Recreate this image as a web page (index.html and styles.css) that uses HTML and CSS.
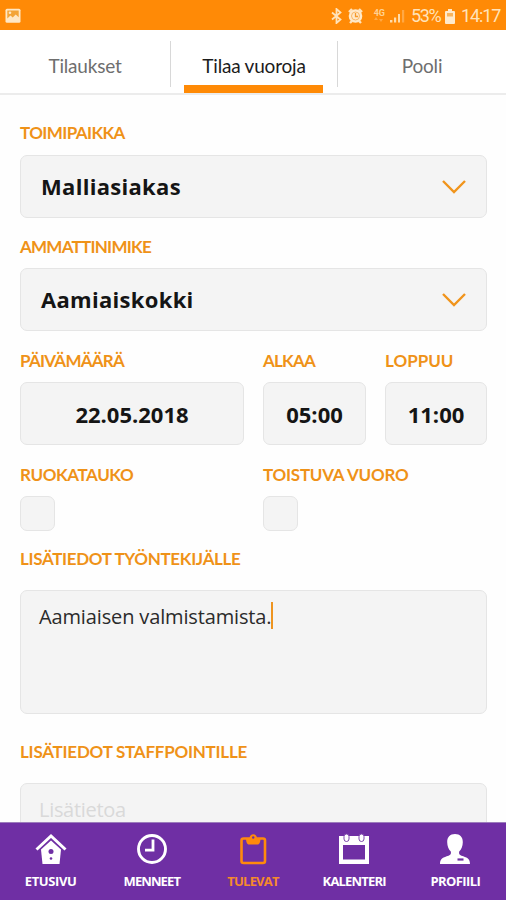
FILE: index.html
```
<!DOCTYPE html>
<html lang="fi">
<head>
    <meta charset="UTF-8">
    <meta name="viewport" content="width=device-width, initial-scale=1.0">
    <title>Tilaa vuoroja</title>
    <link rel="stylesheet" href="styles.css">
</head>
<body>

<div class="status-bar">
    <svg class="status-photo" width="16" height="16" viewBox="0 0 16 16">
        <rect x="0.5" y="0.8" width="15" height="14" rx="1.5" fill="#ffe7c4"/>
        <path d="M2.3 2.6h11.4v6.6l-3-2.8-3 3-2.2-1.800-3.200 3z" fill="#f3a437"/>
        <circle cx="5" cy="4.800" r="1.300" fill="#ffe7c4"/>
    </svg>
    <div class="status-right">
        <svg class="icon-bt" width="11" height="16" viewBox="0 0 11 16" fill="none" stroke="#ffe3ba" stroke-width="1.8">
            <path d="M1 4.500l8.500 7L5.500 15V1l4 3.500L1 11.500"/>
        </svg>
        <svg class="icon-alarm" width="15" height="16" viewBox="0 0 15 16">
            <path d="M1 4l3-3M14 4l-3-3M2 15l2-2M13 15l-2-2" stroke="#ffe3ba" stroke-width="2.4"/>
            <circle cx="7.5" cy="8" r="6.8" fill="#ffe9c9"/>
            <circle cx="7.5" cy="8" r="4" fill="none" stroke="#f9b765" stroke-width="1"/>
            <path d="M7.500 5V8.500H10" stroke="#f59a2a" stroke-width="1.300" fill="none"/>
        </svg>
        <div class="network">
            <span>4G</span>
            <svg width="9" height="6" viewBox="0 0 9 6" fill="#ffa845">
                <path d="M0 3l2-3 2 3zM5 2h4L7 5z"/>
            </svg>
        </div>
        <svg class="icon-signal" width="15" height="14" viewBox="0 0 15 14">
            <path d="M0 11h2.400v2.500H0zM4 8.500h2.200v5H4zM8 5h2v8.500H8z" fill="#ffdcaa"/>
            <path d="M12 1h2.200v12.500H12z" fill="#ffa845"/>
        </svg>
        <span class="battery-text">53%</span>
        <svg class="icon-battery" width="10" height="15" viewBox="0 0 10 15">
            <path d="M3 0h4v2h2a1 1 0 0 1 1 1v11a1 1 0 0 1-1 1H1a1 1 0 0 1-1-1V3a1 1 0 0 1 1-1h2z" fill="#ffeacb"/>
            <path d="M2 4h6v3.500H2z" fill="#f8b45c"/>
        </svg>
        <span class="clock">14:17</span>
    </div>
</div>

<div class="tabs">
    <div class="tab">Tilaukset</div>
    <div class="tab active">Tilaa vuoroja</div>
    <div class="tab">Pooli</div>
</div>

<div class="form">
    <div class="field first">
        <div class="label ls-place">TOIMIPAIKKA</div>
        <div class="box select">
            <span>Malliasiakas</span>
            <svg width="26" height="16" viewBox="0 0 26 16"><path d="M2 2l11 11L24 2"/></svg>
        </div>
    </div>

    <div class="field">
        <div class="label ls-job">AMMATTINIMIKE</div>
        <div class="box select">
            <span>Aamiaiskokki</span>
            <svg width="26" height="16" viewBox="0 0 26 16"><path d="M2 2l11 11L24 2"/></svg>
        </div>
    </div>

    <div class="row">
        <div>
            <div class="label ls-date">PÄIVÄMÄÄRÄ</div>
            <div class="box center">22.05.2018</div>
        </div>
        <div>
            <div class="label ls-start">ALKAA</div>
            <div class="box center">05:00</div>
        </div>
        <div>
            <div class="label ls-end">LOPPUU</div>
            <div class="box center">11:00</div>
        </div>
    </div>

    <div class="row checks">
        <div>
            <div class="label ls-break">RUOKATAUKO</div>
            <div class="checkbox"></div>
        </div>
        <div class="wide">
            <div class="label ls-repeat">TOISTUVA VUORO</div>
            <div class="checkbox"></div>
        </div>
    </div>

    <div class="notes">
        <div class="label ls-worker">LISÄTIEDOT TYÖNTEKIJÄLLE</div>
        <div class="textarea"><span>Aamiaisen valmistamista.</span><span class="caret"></span></div>
    </div>

    <div class="notes">
        <div class="label ls-staff">LISÄTIEDOT STAFFPOINTILLE</div>
        <div class="textarea placeholder">Lisätietoa</div>
    </div>
</div>

<div class="nav">
    <div class="nav-item nav-home">
        <svg width="32" height="32" viewBox="0 0 32 32">
            <path d="M1.500 16.500L16 3l14.500 13.500" fill="none" stroke="#fff" stroke-width="3"/>
            <path d="M16 7.500l10 9-1.500 14.500h-17L6 16.500z" fill="#fff"/>
            <circle cx="16" cy="18.500" r="2.500" fill="#6f2fa4"/>
            <circle cx="16" cy="25.500" r="1.300" fill="#6f2fa4"/>
        </svg>
        <span>ETUSIVU</span>
    </div>
    <div class="nav-item nav-past">
        <svg width="32" height="32" viewBox="0 0 32 32" fill="none" stroke="#fff">
            <circle cx="16" cy="16" r="13.500" stroke-width="2.900"/>
            <path d="M17 6.500V17.200H9" stroke-width="2.800"/>
        </svg>
        <span>MENNEET</span>
    </div>
    <div class="nav-item nav-next">
        <svg width="32" height="32" viewBox="0 0 32 32">
            <rect x="4.500" y="5.500" width="23.500" height="24.500" rx="2" fill="none" stroke="#ff8a0c" stroke-width="2.600"/>
            <path d="M9 5h3.500C13 0 19.500 0 20 5h3.500c0 4-1 6.500-3 6.500H12C10 11.500 9 9 9 5z" fill="#ff8a0c"/>
            <circle cx="16.200" cy="4.500" r="1.200" fill="#6f2fa4"/>
        </svg>
        <span>TULEVAT</span>
    </div>
    <div class="nav-item nav-calendar">
        <svg width="32" height="32" viewBox="0 0 32 32">
            <path d="M1 3h30v28H1zM5 12v14.500h22V12z" fill="#fff" fill-rule="evenodd"/>
            <rect x="6" y="1" width="5" height="7.500" rx="2.500" fill="#fff" stroke="#7d48ac"/>
            <rect x="21" y="1" width="5" height="7.500" rx="2.500" fill="#fff" stroke="#7d48ac"/>
        </svg>
        <span>KALENTERI</span>
    </div>
    <div class="nav-item nav-profile">
        <svg width="32" height="32" viewBox="0 0 32 32">
            <path d="M16 1c5 0 8 3.200 7.800 8.200-.1 4-1.300 7-3.600 9.300-.6 2.500.3 3.500 2.300 4.200 5 1.700 8.500 2.300 8.500 8.300H1c0-6 3.500-6.600 8.500-8.300 2-.7 2.900-1.700 2.300-4.200C9.500 16.200 8.300 13.200 8.200 9.200 8 4.200 11 1 16 1z" fill="#fff"/>
            <path d="M18.500 26.500h6" stroke="#6f2fa4" stroke-width="2.200"/>
        </svg>
        <span>PROFIILI</span>
    </div>
</div>

</body>
</html>
```
FILE: styles.css
```
* {
    box-sizing: border-box;
}

body {
    margin: 0;
    height: 900px;
    display: flex;
    flex-direction: column;
    overflow: hidden;
    background: #fefefe;
    font-family: "Open Sans", "Noto Sans", sans-serif;
}

svg {
    display: block;
    flex: none;
}

.status-bar {
    height: 30px;
    flex: none;
    padding: 2px 6px 0 5px;
    display: flex;
    align-items: center;
    justify-content: space-between;
    background: #ff8a06;
    color: #ffe3ba;
}

.status-right {
    display: flex;
    align-items: center;
    font: 18px/20px Roboto, sans-serif;
}

.icon-alarm { margin-left: 6px; }

.network {
    margin-left: 11px;
    font-size: 9px;
    line-height: 8px;
    font-weight: bold;
    color: #ffd193;
}

.icon-signal { margin-left: 5px; }
.battery-text { margin-left: 6px; width: 29px; letter-spacing: -1.4px; white-space: nowrap; }
.icon-battery { margin-left: 5px; }
.clock { margin-left: 6px; width: 39px; letter-spacing: -1.1px; white-space: nowrap; }

.tabs {
    height: 65px;
    flex: none;
    display: grid;
    grid-template-columns: 170px 168px 168px;
    background: #fff;
    border-bottom: 2px solid #ececec;
}

.tab {
    height: 46px;
    margin-top: 11px;
    text-align: center;
    font: 19px/49px Lato, sans-serif;
    letter-spacing: -0.2px;
    color: #6e6e6e;
}

.tab.active {
    height: 52px;
    color: #1c1c1c;
    background:
        linear-gradient(#ff8a06, #ff8a06) 14px 44px / 139px 8px no-repeat,
        linear-gradient(#d8d8d8, #d8d8d8) 0 0 / 1px 46px no-repeat,
        linear-gradient(#d8d8d8, #d8d8d8) 100% 0 / 1px 46px no-repeat;
}

.form {
    flex: 1;
    min-height: 0;
    overflow: hidden;
    padding: 27px 19px 0 20px;
}

.label {
    height: 22px;
    margin-bottom: 10px;
    font: bold 17px/22px Lato, sans-serif;
    color: #ef9218;
    white-space: nowrap;
}

.ls-place { letter-spacing: -0.6px; }
.ls-job { letter-spacing: -0.75px; }
.ls-date { letter-spacing: -0.75px; }
.ls-start { letter-spacing: -0.8px; }
.ls-break { letter-spacing: -0.4px; }
.ls-repeat { letter-spacing: -0.25px; }
.ls-worker { letter-spacing: -0.33px; }
.ls-staff { letter-spacing: -0.24px; }

.field { margin-bottom: 19px; }
.first { margin-bottom: 18px; }
.first .label { margin-bottom: 11px; }

.box, .textarea, .checkbox {
    background: #f4f4f4;
    border: 1.5px solid #e5e5e5;
    border-radius: 7px;
}

.box {
    height: 63px;
    font-size: 22px;
    font-weight: bold;
    line-height: 63px;
    color: #151515;
}

.select {
    display: flex;
    align-items: center;
    justify-content: space-between;
    padding: 0 19px 0 20px;
    letter-spacing: 0.3px;
}

.select path {
    fill: none;
    stroke: #f0941c;
    stroke-width: 2.4;
}

.center { text-align: center; }

.row {
    display: grid;
    grid-template-columns: 224px 103px 102px;
    column-gap: 19px;
    margin-bottom: 19px;
}

.checks { margin-bottom: 17px; }
.wide { grid-column: span 2; }

.checkbox {
    width: 35px;
    height: 35px;
}

.notes { margin-bottom: 27px; }
.notes .label { margin-bottom: 20px; }

.textarea {
    height: 124px;
    padding: 11px 18px;
    display: flex;
    font-size: 20px;
    line-height: 30px;
    letter-spacing: -0.14px;
    color: #2b2b2b;
}

.placeholder {
    letter-spacing: -0.3px;
    color: #d9d9d9;
}

.caret {
    width: 2px;
    height: 27px;
    background: #ee9420;
}

.nav {
    height: 78px;
    flex: none;
    display: grid;
    grid-template-columns: repeat(5, 1fr);
    background: #6f2fa4;
    border-top: 1px solid #9c7cbc;
}

.nav-item {
    padding-top: 10px;
    display: flex;
    flex-direction: column;
    align-items: center;
    font: bold 13px/16px "Open Sans", sans-serif;
    color: #fff;
    white-space: nowrap;
}

.nav-item span { margin-top: 8px; }

.nav-home { letter-spacing: -0.4px; }
.nav-past { letter-spacing: -0.9px; }
.nav-next { letter-spacing: -0.8px; color: #f58a2b; }
.nav-calendar { letter-spacing: -0.8px; }
.nav-profile { letter-spacing: -0.6px; }
```
